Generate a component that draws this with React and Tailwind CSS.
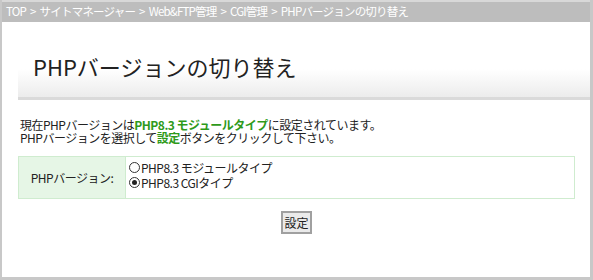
export default function App() {
  const font = { fontFamily: '"Noto Sans CJK JP", "Noto Sans", sans-serif' };
  const Sep = () => <span className="mx-[4px]">&gt;</span>;
  return (
    <div className="w-[593px] h-[280px] bg-white overflow-hidden text-[#222]" style={font}>
      <div className="w-full h-full border-l-[2px] border-r-[3px] border-b-[3px] border-[#c8c8c8] flex flex-col">
        <div className="h-[22px] shrink-0 bg-[#bdbdbd] border-t-[2px] border-[#d8d8d8] flex items-center pl-[4px] text-white text-[11.5px] leading-none tracking-[-0.8px] whitespace-nowrap">
          TOP<Sep />サイトマネージャー<Sep />Web&amp;FTP管理<Sep />CGI管理<Sep />PHPバージョンの切り替え
        </div>
        <div className="ml-[16px] mt-[19px] h-[59px] shrink-0 bg-gradient-to-b from-white via-white to-[#ececec] border-b-[3px] border-[#dadada] flex items-center pl-[15px]">
          <h1 className="text-[22px] leading-none text-[#222] tracking-[0px] -mt-[6px]">PHPバージョンの切り替え</h1>
        </div>
        <div className="ml-[18px] mt-[18px] text-[12px] leading-[13px] tracking-[-0.5px]">
          <p>
            現在PHPバージョンは<span className="font-bold text-[#2e9a1a]">PHP8.3 モジュールタイプ</span>に設定されています。
          </p>
          <p>
            PHPバージョンを選択して<span className="font-bold text-[#2e9a1a]">設定</span>ボタンをクリックして下さい。
          </p>
        </div>
        <div className="ml-[16px] mr-[15px] mt-[12px] flex border border-[#cfeccf] h-[43px] shrink-0">
          <div className="w-[107px] bg-[#e6f6e6] border-r border-[#cfeccf] flex items-center justify-center text-[12px] tracking-[-0.5px]">
            PHPバージョン:
          </div>
          <div className="flex flex-col justify-center pl-[3px] pb-[5px] text-[12px] leading-[15px] tracking-[-0.5px]">
            <label className="flex items-center">
              <span className="w-[11px] h-[11px] rounded-full border border-[#333] mr-[1px] inline-block" />
              PHP8.3 モジュールタイプ
            </label>
            <label className="flex items-center">
              <span className="w-[11px] h-[11px] rounded-full border border-[#333] mr-[1px] flex items-center justify-center">
                <span className="w-[5px] h-[5px] rounded-full bg-[#222]" />
              </span>
              PHP8.3 CGIタイプ
            </label>
          </div>
        </div>
        <div className="flex justify-center mt-[12px] pl-[1px]">
          <button className="h-[23px] px-[1px] border-[2px] border-[#a0a0a0] bg-[#eaeaea] text-[12px] leading-none text-[#222]">
            設定
          </button>
        </div>
      </div>
    </div>
  );
}
